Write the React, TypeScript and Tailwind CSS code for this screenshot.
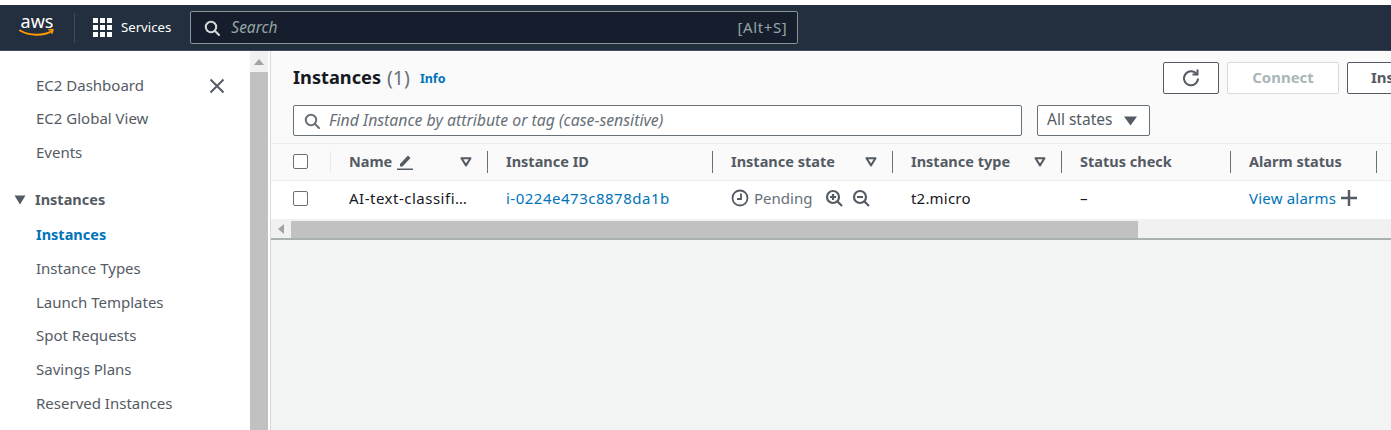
import React from "react";

const font = { fontFamily: '"Noto Sans", sans-serif' };

function Search({ className = "" }: { className?: string }) {
  return (
    <svg viewBox="0 0 16 16" fill="none" stroke="currentColor" strokeWidth="2" className={className}>
      <circle cx="7" cy="7" r="5.2" />
      <path d="M10.8 10.8 15 15" strokeLinecap="round" />
    </svg>
  );
}

function FilterTri({ className = "" }: { className?: string }) {
  return (
    <svg viewBox="0 0 12 10" fill="none" stroke="#545b64" strokeWidth="2" className={className}>
      <path d="M1.5 1.2h9L6 8.4z" strokeLinejoin="round" />
    </svg>
  );
}

function Checkbox() {
  return <div className="w-[15px] h-[15px] rounded-[2px] border border-[#687078] bg-white" />;
}

function Divider() {
  return <div className="w-px h-[22px] bg-[#687078] shrink-0" />;
}

function Side({ label, active = false, className = "" }: { label: string; active?: boolean; className?: string }) {
  return (
    <div className={`pl-[36px] h-[33.7px] flex items-center ${active ? "text-[14.5px] font-bold text-[#0073bb]" : "text-[15px] text-[#545b64]"} ${className}`}>
      {label}
    </div>
  );
}

export default function App() {
  return (
    <div style={font} className="w-[1391px] h-[430px] overflow-hidden bg-white flex flex-col">
      <div className="h-[5px] bg-white shrink-0" />
      <header className="h-[46px] shrink-0 bg-[#232f3e] border-b border-[#414d5c] flex items-center">
        <div className="w-[75px] h-[30px] shrink-0 border-r border-[#414d5c] flex flex-col items-center justify-center">
          <span className="text-[18px] leading-[16px] text-white -mt-[4px]">aws</span>
          <svg width="38" height="9" viewBox="0 0 38 9" fill="none" className="mt-[0px]">
            <path d="M2 1.5c9 5.5 24 5.6 32 .3" stroke="#ff9900" strokeWidth="2" strokeLinecap="round" />
            <path d="M31 .7l4-.4-1 3.8" stroke="#ff9900" strokeWidth="1.6" strokeLinecap="round" strokeLinejoin="round" />
          </svg>
        </div>
        <div className="grid grid-cols-3 gap-[2px] ml-[18px] w-[19px]">
          {Array.from({ length: 9 }).map((_, i) => (
            <div key={i} className="w-[5px] h-[5px] bg-white" />
          ))}
        </div>
        <span className="ml-[9px] text-[13.2px] text-white">Services</span>
        <div className="ml-[19px] w-[608px] h-[33px] rounded-[2px] border border-[#879596] bg-[#161e2d] flex items-center pl-[13px] pr-[10px]">
          <Search className="w-[16px] h-[16px] text-[#d5dbdb]" />
          <span className="ml-[11px] text-[15.5px] italic text-[#95a5a6]">Search</span>
          <span className="ml-auto text-[15px] tracking-[0.6px] text-[#95a5a6]">[Alt+S]</span>
        </div>
      </header>
      <div className="flex-1 flex min-h-0">
        <aside className="w-[250px] shrink-0 bg-white relative pt-[17px]">
          <Side label="EC2 Dashboard" />
          <Side label="EC2 Global View" />
          <Side label="Events" />
          <div className="h-[14px]" />
          <div className="h-[34px] mb-[0.5px] flex items-center pl-[14px] text-[14.5px] font-bold text-[#545b64]">
            <svg width="12" height="10" viewBox="0 0 12 10"><path d="M0.5 0.5h11L6 9.5z" fill="#545b64" /></svg>
            <span className="ml-[9px]">Instances</span>
          </div>
          <Side label="Instances" active />
          <Side label="Instance Types" />
          <Side label="Launch Templates" />
          <Side label="Spot Requests" />
          <Side label="Savings Plans" />
          <Side label="Reserved Instances" />
          <svg className="absolute left-[209px] top-[27px]" width="16" height="16" viewBox="0 0 16 16" fill="none" stroke="#545b64" strokeWidth="2">
            <path d="M1.5 1.5l13 13M14.5 1.5l-13 13" />
          </svg>
        </aside>
        <div className="w-[18px] shrink-0 bg-[#f1f1f1] flex flex-col">
          <div className="h-[21px] flex items-center justify-center">
            <svg width="10" height="6" viewBox="0 0 10 6"><path d="M5 0l5 6H0z" fill="#a3a3a3" /></svg>
          </div>
          <div className="flex-1 bg-[#c1c1c1]" />
        </div>
        <div className="w-[2px] shrink-0 bg-white" />
        <main className="flex-1 min-w-0 overflow-hidden bg-[#f2f3f3] border-l border-[#d5dbdb] flex flex-col">
          <div className="bg-[#fafafa] h-[93px] shrink-0 border-b border-[#eaeded] pl-[22px]">
            <div className="flex items-start pt-[11px] w-[1200px]">
              <div className="flex items-center pt-[1px] w-[870px] shrink-0">
                <span className="text-[18.2px] font-bold text-[#16191f]">Instances</span>
                <span className="ml-[6px] text-[19.5px] text-[#687078]">(1)</span>
                <span className="ml-[10px] mt-[4px] text-[12.5px] font-bold text-[#0073bb]">Info</span>
              </div>
              <button className="w-[56px] h-[32px] shrink-0 rounded-[2px] border border-[#545b64] bg-white flex items-center justify-center">
                <svg width="20" height="20" viewBox="0 0 20 20" fill="none" stroke="#545b64" strokeWidth="2">
                  <path d="M15.5 6A7 7 0 1 0 17 10.5" />
                  <path d="M16.5 1.5v5h-5" />
                </svg>
              </button>
              <button className="ml-[8px] w-[112px] h-[32px] shrink-0 rounded-[2px] border border-[#d5dbdb] bg-white text-[15px] font-bold text-[#aab7b8] pb-[2px]">
                Connect
              </button>
              <button className="ml-[8px] w-[140px] h-[32px] shrink-0 rounded-[2px] border border-[#545b64] bg-white text-[15px] font-bold text-[#545b64] text-left pl-[23px] pb-[2px] whitespace-nowrap">
                Instance state
              </button>
            </div>
            <div className="flex items-center mt-[11px]">
              <div className="w-[729px] h-[31px] shrink-0 rounded-[2px] border border-[#687078] bg-white flex items-center pl-[10px]">
                <Search className="w-[16px] h-[16px] text-[#687078]" />
                <span className="ml-[9px] text-[15.8px] italic text-[#687078]">Find Instance by attribute or tag (case-sensitive)</span>
              </div>
              <div className="ml-[15px] w-[113px] h-[31px] shrink-0 rounded-[2px] border border-[#687078] bg-white flex items-center pl-[9px] pb-[1px] text-[15.5px] text-[#545b64]">
                All states
                <svg className="ml-[12px] mt-[1px]" width="13" height="10" viewBox="0 0 13 10"><path d="M0 .5h13L6.5 9.5z" fill="#545b64" /></svg>
              </div>
            </div>
          </div>
          <div className="bg-[#fafafa] h-[37px] shrink-0 border-b border-[#eaeded] flex items-center text-[14.5px] font-bold text-[#545b64]">
            <div className="w-[59px] pl-[22px] pb-[2px] flex items-center shrink-0"><Checkbox /></div>
            <div className="w-px h-[22px] bg-[#eaeded] shrink-0" />
            <div className="w-[156px] pl-[18px] flex items-center shrink-0">
              <span>Name</span>
              <svg className="ml-[4px]" width="18" height="18" viewBox="0 0 18 18" fill="#545b64">
                <path d="M4 11l8-8.5 2.5 2.5L6.5 13.5H4z" />
                <path d="M1 15.5h16V17H1z" />
              </svg>
              <FilterTri className="w-[12px] h-[10px] ml-[46px]" />
            </div>
            <Divider />
            <div className="w-[224px] pl-[18px] shrink-0">Instance ID</div>
            <Divider />
            <div className="w-[179px] pl-[18px] shrink-0 flex items-center">
              <span>Instance state</span>
              <FilterTri className="w-[12px] h-[10px] ml-auto mr-[15px]" />
            </div>
            <Divider />
            <div className="w-[168px] pl-[18px] shrink-0 flex items-center">
              <span>Instance type</span>
              <FilterTri className="w-[12px] h-[10px] ml-auto mr-[15px]" />
            </div>
            <Divider />
            <div className="w-[168px] pl-[18px] shrink-0">Status check</div>
            <Divider />
            <div className="w-[145px] pl-[18px] shrink-0">Alarm status</div>
            <Divider />
          </div>
          <div className="bg-white h-[38px] shrink-0 flex items-center pb-[4px] text-[15px] text-[#16191f]">
            <div className="w-[61px] pl-[22px] shrink-0"><Checkbox /></div>
            <div className="w-[156px] pl-[17px] shrink-0 whitespace-nowrap tracking-[0.5px]">AI-text-classifi…</div>
            <div className="w-[225px] pl-[18px] shrink-0 text-[#0073bb] tracking-[0.5px]">i-0224e473c8878da1b</div>
            <div className="w-[180px] pl-[18px] shrink-0 flex items-center text-[#687078]">
              <svg width="18" height="18" viewBox="0 0 18 18" fill="none" stroke="#545b64" strokeWidth="1.8">
                <circle cx="9" cy="9" r="7.5" />
                <path d="M10 4.5V10H6" />
              </svg>
              <span className="ml-[5px]">Pending</span>
              <svg className="ml-[13px]" width="18" height="18" viewBox="0 0 18 18" fill="none" stroke="#545b64" strokeWidth="2.2">
                <circle cx="8" cy="8" r="6" />
                <path d="M12.5 12.5L17 17M5 8h6M8 5v6" />
              </svg>
              <svg className="ml-[9px]" width="18" height="18" viewBox="0 0 18 18" fill="none" stroke="#545b64" strokeWidth="2.2">
                <circle cx="8" cy="8" r="6" />
                <path d="M12.5 12.5L17 17M5 8h6" />
              </svg>
            </div>
            <div className="w-[169px] pl-[18px] shrink-0 tracking-[0.2px]">t2.micro</div>
            <div className="w-[169px] pl-[18px] shrink-0">–</div>
            <div className="pl-[18px] shrink-0 flex items-center text-[#0073bb] tracking-[0.2px]">
              View alarms
              <svg className="ml-[4px]" width="18" height="18" viewBox="0 0 18 18" fill="none" stroke="#545b64" strokeWidth="2.4">
                <path d="M9 1v16M1 9h16" />
              </svg>
            </div>
          </div>
          <div className="h-[21px] shrink-0 bg-[#f1f1f1] border-b-2 border-[#a9b1b3] flex items-start pt-[1.5px]">
            <div className="w-[20px] h-[17px] flex items-center justify-center shrink-0">
              <svg width="6" height="10" viewBox="0 0 6 10"><path d="M0 5l6-5v10z" fill="#a3a3a3" /></svg>
            </div>
            <div className="w-[847px] h-[17px] bg-[#c1c1c1]" />
          </div>
          <div className="flex-1 bg-[#f2f3f3]" />
        </main>
      </div>
    </div>
  );
}
